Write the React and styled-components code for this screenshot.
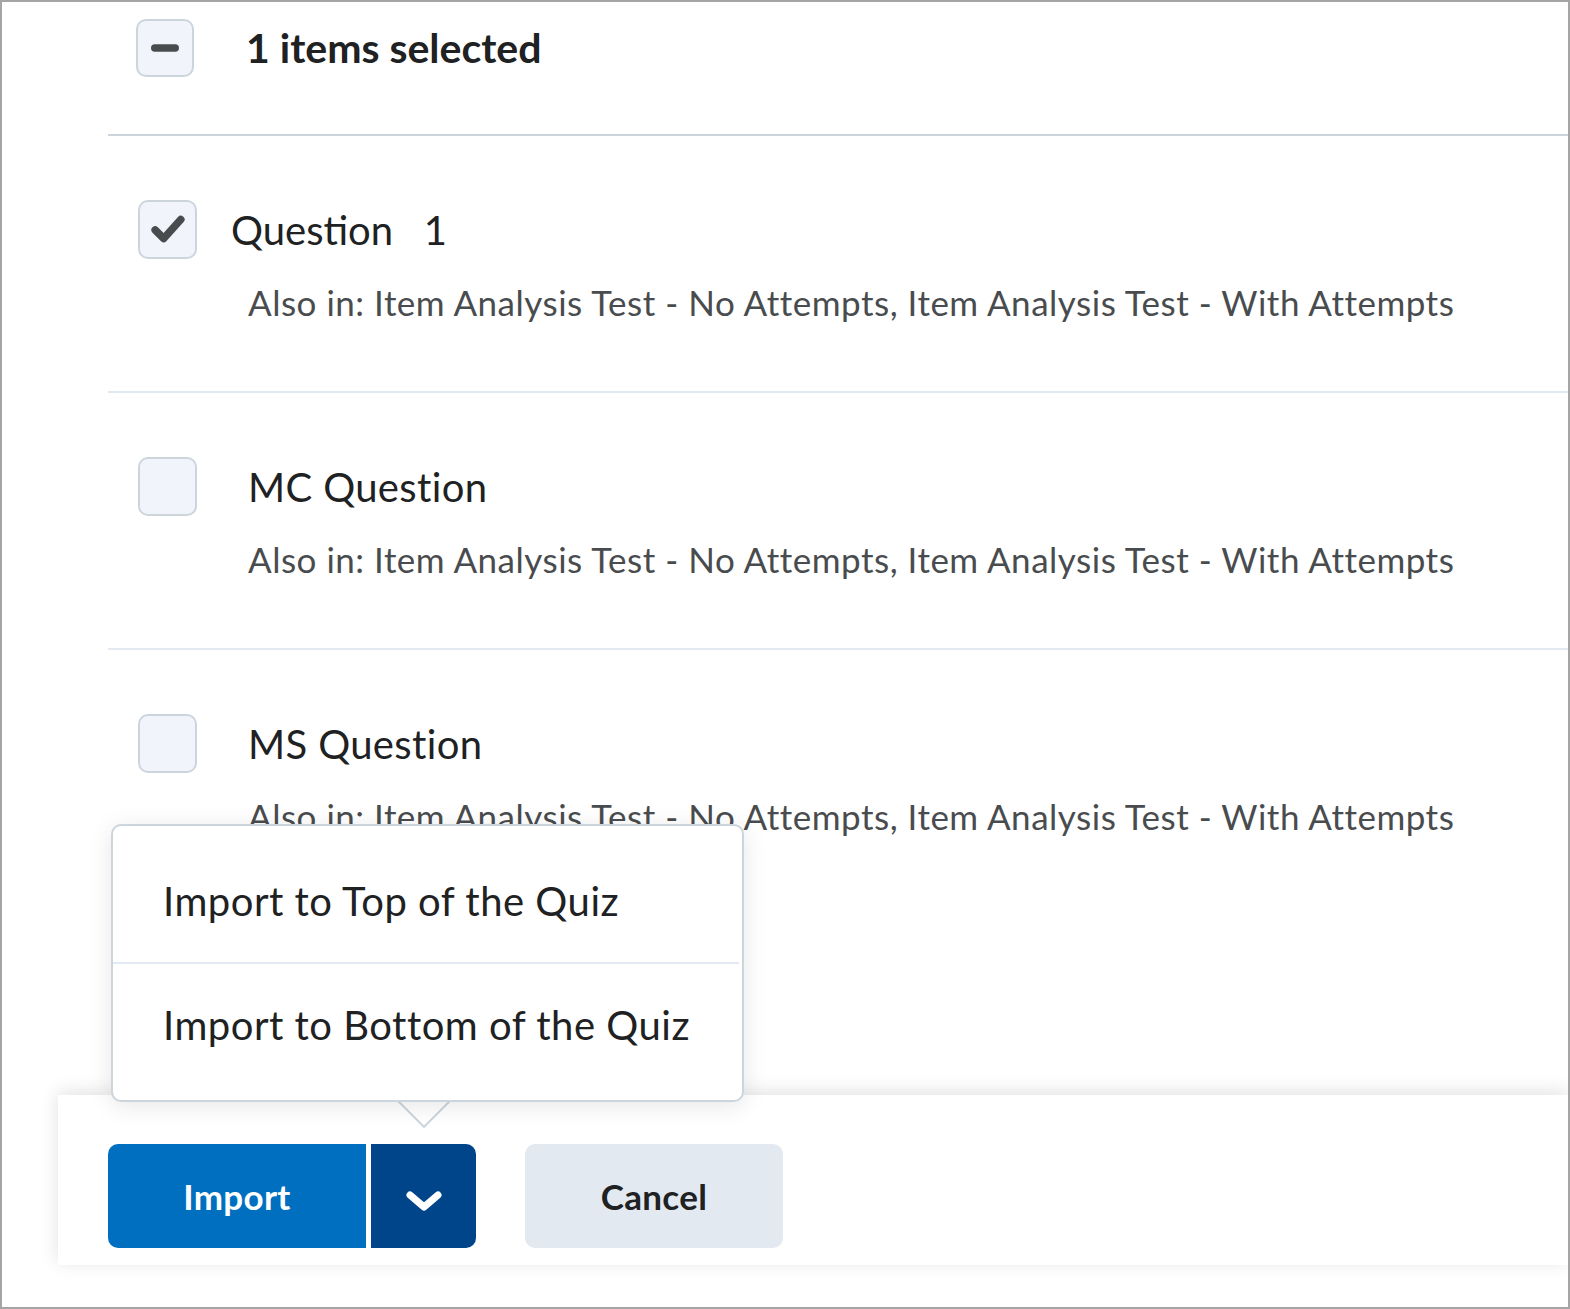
import React from "react";
import styled, { createGlobalStyle } from "styled-components";

const GlobalStyle = createGlobalStyle`
  body {
    margin: 0;
    background: #fff;
    font-family: Lato, "Noto Sans", "Liberation Sans", sans-serif;
  }
`;

const Frame = styled.div`
  position: relative;
  width: 1570px;
  height: 1309px;
  box-sizing: border-box;
  border: 2px solid #a5a5a5;
  background: #fff;
  overflow: hidden;
`;

const List = styled.div`
  padding-left: 106px;
`;

const SelectionHeader = styled.div`
  height: 134px;
  box-sizing: border-box;
  padding: 17px 0 0 28px;
  border-bottom: 2px solid #cdd5dc;
  display: flex;
  align-items: flex-start;
`;

const HeaderLine = styled.div`
  display: flex;
  align-items: center;
  height: 58px;
`;

const SelectedText = styled.span`
  margin-left: 52px;
  font-size: 41px;
  font-weight: 700;
  line-height: 48px;
  color: #202122;
`;

const Box = styled.span`
  width: ${(p) => p.$size}px;
  height: ${(p) => p.$size}px;
  flex: none;
  box-sizing: border-box;
  border: 2px solid #cdd5dc;
  border-radius: 10px;
  background: #f1f5fb;
  display: flex;
  align-items: center;
  justify-content: center;
`;

const Row = styled.div`
  height: 257px;
  box-sizing: border-box;
  padding: 64px 0 0 30px;
  border-bottom: ${(p) => (p.$last ? "none" : "2px solid #e3e9f1")};
`;

const TitleLine = styled.div`
  display: flex;
  align-items: center;
  height: 59px;
`;

const Title = styled.span`
  margin-left: ${(p) => p.$gap}px;
  font-size: 40px;
  line-height: 48px;
  letter-spacing: ${(p) => p.$spacing}px;
  color: #202122;
  white-space: pre;
`;

const Detail = styled.div`
  margin: 22px 0 0 110px;
  font-size: 35px;
  line-height: 42px;
  letter-spacing: 0.51px;
  color: #494c4e;
  white-space: nowrap;
`;

const Footer = styled.div`
  position: absolute;
  left: 56px;
  right: 0;
  top: 1093px;
  height: 170px;
  background: #fff;
  z-index: 1;
  box-shadow: 0 -3px 18px rgba(0, 0, 0, 0.12);
  box-sizing: border-box;
  padding: 49px 0 0 50px;
  display: flex;
  align-items: flex-start;
`;

const SplitButton = styled.div`
  display: flex;
  gap: 5px;
  margin-right: 49px;
`;

const Button = styled.button`
  height: 104px;
  width: ${(p) => p.$width}px;
  border: none;
  padding: 0;
  font-family: inherit;
  font-size: 35px;
  font-weight: 700;
  letter-spacing: 0.3px;
  color: ${(p) => p.$color};
  background: ${(p) => p.$bg};
  border-radius: ${(p) => p.$radius};
  display: flex;
  align-items: center;
  justify-content: center;
  cursor: pointer;
`;

const Menu = styled.div`
  position: absolute;
  left: 109px;
  top: 822px;
  width: 633px;
  box-sizing: border-box;
  border: 2px solid #cdd5dc;
  border-radius: 10px;
  background: #fff;
  padding: 14px 0;
  z-index: 3;
  box-shadow: 0 4px 24px rgba(0, 0, 0, 0.1);
`;

const MenuItem = styled.div`
  padding: 37px 50px;
  font-size: 40px;
  line-height: 48px;
  letter-spacing: 0.5px;
  color: #202122;
  border-bottom: ${(p) => (p.$divider ? "2px solid #e3e9f1" : "none")};
  margin-right: ${(p) => (p.$divider ? "3px" : "0")};
`;

const MenuArrow = styled.div`
  position: absolute;
  left: 402px;
  top: 1078px;
  width: 40px;
  height: 40px;
  box-sizing: border-box;
  border: 2px solid #cdd5dc;
  background: #fff;
  transform: rotate(45deg);
  z-index: 2;
`;

const Minus = () => (
  <svg width="58" height="58" viewBox="0 0 58 58">
    <rect x="14" y="25" width="30" height="8" rx="4" fill="#494c4e" />
  </svg>
);

const Check = () => (
  <svg width="58" height="58" viewBox="0 0 58 58">
    <polyline
      points="16,29 25,38 43,18"
      fill="none"
      stroke="#494c4e"
      strokeWidth="8"
      strokeLinecap="round"
      strokeLinejoin="round"
    />
  </svg>
);

const Chevron = () => (
  <svg width="38" height="22" viewBox="0 0 38 22" style={{ marginTop: 10 }}>
    <polyline
      points="5,5 19,17 33,5"
      fill="none"
      stroke="#fff"
      strokeWidth="7"
      strokeLinecap="round"
      strokeLinejoin="round"
    />
  </svg>
);

const detail =
  "Also in: Item Analysis Test - No Attempts, Item Analysis Test - With Attempts";

const questions = [
  { title: "Question   1", checked: true, gap: 34, spacing: 0 },
  { title: "MC Question", checked: false, gap: 51, spacing: 0.35 },
  { title: "MS Question", checked: false, gap: 51, spacing: 0.35 },
];

export default function App() {
  return (
    <>
      <GlobalStyle />
      <Frame>
        <List>
          <SelectionHeader>
            <HeaderLine>
              <Box $size={58}>
                <Minus />
              </Box>
              <SelectedText>1 items selected</SelectedText>
            </HeaderLine>
          </SelectionHeader>
          {questions.map((q, i) => (
            <Row key={q.title} $last={i === questions.length - 1}>
              <TitleLine>
                <Box $size={59}>{q.checked && <Check />}</Box>
                <Title $gap={q.gap} $spacing={q.spacing}>
                  {q.title}
                </Title>
              </TitleLine>
              <Detail>{detail}</Detail>
            </Row>
          ))}
        </List>

        <Menu>
          <MenuItem $divider>Import to Top of the Quiz</MenuItem>
          <MenuItem>Import to Bottom of the Quiz</MenuItem>
        </Menu>
        <MenuArrow />

        <Footer>
          <SplitButton>
            <Button $width={258} $bg="#006fbf" $color="#fff" $radius="10px 0 0 10px">
              Import
            </Button>
            <Button $width={105} $bg="#004489" $color="#fff" $radius="0 10px 10px 0">
              <Chevron />
            </Button>
          </SplitButton>
          <Button $width={258} $bg="#e3e9f1" $color="#202122" $radius="10px">
            Cancel
          </Button>
        </Footer>
      </Frame>
    </>
  );
}
